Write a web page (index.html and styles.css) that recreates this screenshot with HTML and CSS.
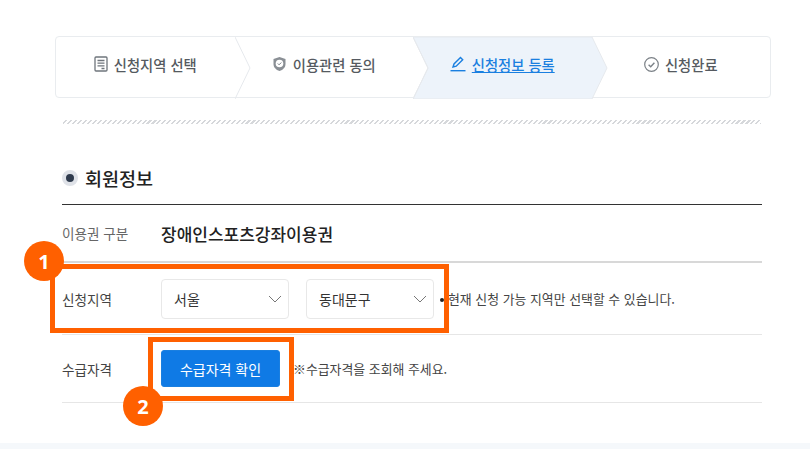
FILE: index.html
```html
<!DOCTYPE html>
<html lang="ko">
  <head>
    <meta charset="UTF-8" />
    <link rel="stylesheet" href="styles.css">
    <title>신청정보 등록</title>
  </head>
  <body>
    <div class="page">
      <ol class="steps">
        <li class="step">
          <svg class="step-icon" width="14" height="16" viewBox="0 0 14 16" fill="none" stroke="#6f757c" stroke-width="1.3">
            <rect x="1" y="1" width="12" height="14" rx="1" />
            <path d="M3.5 4.5h7M3.5 7.2h7M3.5 9.9h7M7.5 12.5h3" />
          </svg>
          <span>신청지역 선택</span>
          <svg class="step-arrow" width="16" height="62" viewBox="0 0 16 62" fill="none" stroke="#e6e9ed"><path d="M0 0l15 31L0 62" /></svg>
        </li>
        <li class="step">
          <svg class="step-icon" width="15" height="16" viewBox="0 0 15 16" fill="none">
            <path d="M7.5 1l6 2v5c0 3.5-2.500 5.800-6 7-3.500-1.200-6-3.500-6-7V3z" fill="#8a8f95" />
            <circle cx="7.500" cy="7.500" r="3.800" fill="#fff" />
            <path d="M5.800 7.500l1.300 1.300 2.200-2.300" stroke="#7b8187" stroke-width="1" />
          </svg>
          <span>이용관련 동의</span>
          <svg class="step-arrow" width="16" height="62" viewBox="0 0 16 62" fill="none" stroke="#e6e9ed"><path d="M0 0l15 31L0 62" /></svg>
        </li>
        <li class="step step-active">
          <svg class="step-bg" width="195" height="62" viewBox="0 0 195 62"><path d="M0 0H179L194 31 179 62H0L15 31z" fill="#edf3fa" stroke="#e6e9ed" /></svg>
          <svg class="step-icon" width="16" height="16" viewBox="0 0 16 16" fill="none" stroke="#1a7fe0" stroke-width="1.400">
            <path d="M3 11l1 -3 6.500 -6.500 2.200 2.200L6.200 10.200z" />
            <path d="M.5 14.700h15" />
          </svg>
          <a href="#">신청정보 등록</a>
        </li>
        <li class="step">
          <svg class="step-icon" width="15" height="15" viewBox="0 0 15 15" fill="none" stroke="#7b8187" stroke-width="1.200">
            <circle cx="7.500" cy="7.500" r="6.800" />
            <path d="M4.600 7.700l2.100 2 3.700-4" stroke-width="1.400" />
          </svg>
          <span>신청완료</span>
        </li>
      </ol>

      <div class="dash-line"></div>

      <h2 class="section-title"><i class="dot"></i>회원정보</h2>

      <div class="form-table">
        <div class="row row-type">
          <div class="row-label">이용권 구분</div>
          <strong class="type-name">장애인스포츠강좌이용권</strong>
        </div>
        <div class="row row-area">
          <div class="row-label label-dark">신청지역</div>
          <div class="select">서울
            <svg width="14" height="8" viewBox="0 0 14 8" fill="none" stroke="#777"><path d="M1 1l6 6 6-6" /></svg>
          </div>
          <div class="select">동대문구
            <svg width="14" height="8" viewBox="0 0 14 8" fill="none" stroke="#777"><path d="M1 1l6 6 6-6" /></svg>
          </div>
          <p class="note note-dot">현재 신청 가능 지역만 선택할 수 있습니다.</p>
        </div>
        <div class="row row-check">
          <div class="row-label label-dark">수급자격</div>
          <button class="check-btn">수급자격 확인</button>
          <p class="note">※수급자격을 조회해 주세요.</p>
        </div>
      </div>

      <div class="mark mark-one"></div>
      <div class="mark mark-two"></div>
      <div class="badge badge-one">1</div>
      <div class="badge badge-two">2</div>
    </div>
    <div class="footer-band"></div>
  </body>
</html>
```

FILE: styles.css
```css
* {
  margin: 0;
  padding: 0;
  box-sizing: border-box;
}

html,
body {
  height: 100%;
  overflow: hidden;
}

body {
  position: relative;
  background: #fff;
  font-family: "Noto Sans CJK KR", "Noto Sans", sans-serif;
  color: #333;
}

.page {
  padding: 36px 39px 0 55px;
}

/* Steps */
.steps {
  display: grid;
  grid-template-columns: repeat(4, 1fr);
  height: 62px;
  list-style: none;
  border: 1px solid #e9ecef;
  border-radius: 4px;
  font-size: 14.300px;
  font-weight: 500;
  color: #555a60;
}
.step {
  position: relative;
  display: flex;
  justify-content: center;
  align-items: center;
  gap: 6px;
  padding-bottom: 6px;
}
.step span,
.step a,
.step-icon {
  position: relative;
}
.step-arrow,
.step-bg {
  position: absolute;
  top: 0;
  left: 100%;
  z-index: 1;
}
.step-bg {
  left: 0;
  z-index: 0;
}
.step-active a {
  color: #1a7fe0;
}

.dash-line {
  height: 4px;
  margin: 22px 10px 0 8px;
  background: repeating-linear-gradient(135deg, #fff 0 2px, #d6d8db 2px 3.500px);
}

.section-title {
  display: flex;
  align-items: center;
  gap: 7px;
  margin: 41px 9px 0 7px;
  height: 26px;
  font-size: 18.500px;
  font-weight: 500;
  color: #222;
}
.dot {
  width: 16px;
  height: 16px;
  border-radius: 50%;
  background: #2f3b4d;
  border: 4px solid #dfe2e8;
}

.form-table {
  margin: 13px 9px 0 7px;
  border-top: 1px solid #333;
}
.row {
  display: flex;
  align-items: center;
  border-bottom: 1px solid #e6e6e6;
  font-size: 13.600px;
}
.row-type {
  height: 58px;
  border-bottom-color: #d8d8d8;
  border-bottom-width: 2px;
}
.row-area {
  height: 72px;
}
.row-check {
  height: 68px;
}
.row-label {
  width: 99px;
  color: #666;
  flex-shrink: 0;
}
.label-dark {
  color: #444;
}
.type-name {
  font-size: 17px;
  font-weight: 500;
  color: #222;
}
.select {
  display: flex;
  justify-content: space-between;
  align-items: center;
  width: 128px;
  height: 40px;
  margin-right: 17px;
  padding: 0 6px 0 12px;
  border: 1px solid #e8e8e8;
  border-radius: 4px;
  font-size: 14px;
  color: #333;
}
.note {
  font-size: 12.900px;
  color: #444;
}
.note-dot {
  position: relative;
  margin-left: -3px;
}
.note-dot::before {
  content: "";
  position: absolute;
  left: -8px;
  top: 9px;
  width: 4px;
  height: 4px;
  border-radius: 50%;
  background: #222;
}
.check-btn {
  width: 119px;
  height: 37px;
  margin-right: 13px;
  border: 1px solid #1a7fe0;
  border-radius: 3px;
  background: #0f7ae5;
  color: #fff;
  font-family: inherit;
  font-size: 14px;
}

/* Orange marks over the form */
.mark {
  position: absolute;
  border: 5px solid #ff6000;
}
.mark-one {
  left: 50px;
  top: 264px;
  width: 399px;
  height: 69px;
}
.mark-two {
  left: 148px;
  top: 337px;
  width: 146px;
  height: 64px;
}
.badge {
  position: absolute;
  display: flex;
  justify-content: center;
  align-items: center;
  width: 40px;
  height: 40px;
  border-radius: 50%;
  background: #ff6000;
  color: #fff;
  font-family: "Noto Sans", sans-serif;
  font-size: 20px;
  font-weight: 700;
}
.badge-one {
  left: 24px;
  top: 241px;
}
.badge-two {
  left: 123px;
  top: 386px;
}

.footer-band {
  position: absolute;
  left: 0;
  right: 0;
  top: 443px;
  height: 6px;
  background: #f5f8fb;
}
```
